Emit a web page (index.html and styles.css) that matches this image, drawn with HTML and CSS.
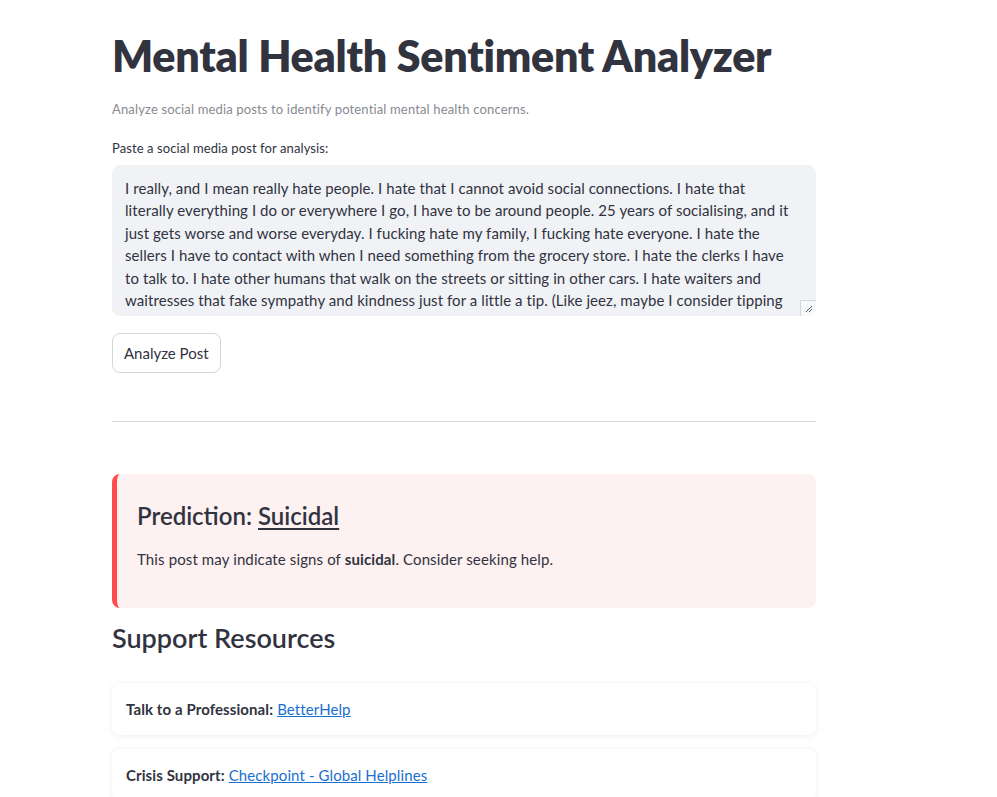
FILE: index.html
```html
<!DOCTYPE html>
<html lang="en">
<head>
<meta charset="utf-8">
<title>Mental Health Sentiment Analyzer</title>
<link rel="stylesheet" href="styles.css">
</head>
<body>
<main class="main">
  <h1 class="title">Mental Health Sentiment Analyzer</h1>
  <p class="caption">Analyze social media posts to identify potential mental health concerns.</p>
  <label class="label">Paste a social media post for analysis:</label>
  <div class="textarea">
    <span class="line">I really, and I mean really hate people. I hate that I cannot avoid social connections. I hate that</span>
    <span class="line">literally everything I do or everywhere I go, I have to be around people. 25 years of socialising, and it</span>
    <span class="line">just gets worse and worse everyday. I fucking hate my family, I fucking hate everyone. I hate the</span>
    <span class="line">sellers I have to contact with when I need something from the grocery store. I hate the clerks I have</span>
    <span class="line">to talk to. I hate other humans that walk on the streets or sitting in other cars. I hate waiters and</span>
    <span class="line">waitresses that fake sympathy and kindness just for a little a tip. (Like jeez, maybe I consider tipping</span>
    <span class="resize"><svg width="8" height="8" viewBox="0 0 8 8"><path d="M7 1 L1 7 M7 4 L4 7" stroke="#555" stroke-width="1" fill="none"/></svg></span>
  </div>
  <button class="btn">Analyze Post</button>
  <hr class="rule">
  <div class="alert">
    <h3 class="alert-title">Prediction: <u>Suicidal</u></h3>
    <p class="alert-text">This post may indicate signs of <b>suicidal</b>. Consider seeking help.</p>
  </div>
  <h2 class="section">Support Resources</h2>
  <div class="card"><b>Talk to a Professional:</b> <a href="#">BetterHelp</a></div>
  <div class="card"><b>Crisis Support:</b> <a href="#">Checkpoint - Global Helplines</a></div>
</main>
</body>
</html>
```
FILE: styles.css
```css
html, body {
  margin: 0;
  padding: 0;
  background: #ffffff;
}
body {
  font-family: Lato, "Noto Sans", sans-serif;
  color: #31333f;
  overflow: hidden;
  height: 797px;
}
.main {
  width: 704px;
  margin-left: 112px;
  padding-top: 30px;
  display: flex;
  flex-direction: column;
}
.title {
  font-size: 43px;
  font-weight: 800;
  line-height: 52px;
  margin: 0;
  letter-spacing: -0.25px;
}
.caption {
  font-size: 13px;
  color: #888a91;
  margin: 18px 0 0;
  line-height: 18px;
  letter-spacing: 0.15px;
}
.label {
  font-size: 13px;
  margin-top: 21px;
  line-height: 18px;
  letter-spacing: 0.1px;
}
.textarea {
  position: relative;
  margin-top: 8px;
  height: 151px;
  box-sizing: border-box;
  background: #f0f2f6;
  border-radius: 8px;
  padding: 12px 13px;
  overflow: hidden;
  font-size: 15px;
  line-height: 22.4px;
  letter-spacing: 0.08px;
}
.line {
  display: block;
  white-space: nowrap;
}
.resize {
  position: absolute;
  right: 0;
  bottom: 0;
  width: 15px;
  height: 15px;
  background: #f7f8fa;
  border-left: 1px solid #d5d7dc;
  border-top: 1px solid #d5d7dc;
  display: flex;
  align-items: center;
  justify-content: center;
}
.btn {
  align-self: flex-start;
  margin-top: 17px;
  height: 40px;
  padding: 0 11px;
  background: #fff;
  border: 1px solid #d6d6d9;
  border-radius: 8px;
  font-family: inherit;
  font-size: 15px;
  color: #31333f;
}
.rule {
  width: 100%;
  margin: 48px 0 0;
  border: 0;
  border-top: 1px solid #d6d6d9;
}
.alert {
  margin-top: 52px;
  height: 134px;
  box-sizing: border-box;
  background: #fdf1f1;
  border-radius: 8px;
  border-left: 5px solid #ff4b4b;
  padding: 26px 20px;
}
.alert-title {
  margin: 0;
  font-size: 24px;
  font-weight: 600;
  line-height: 32px;
}
.alert-title u {
  text-underline-offset: 3px;
}
.alert-text {
  margin: 15px 0 0;
  font-size: 15px;
  line-height: 24px;
  letter-spacing: 0.12px;
}
.section {
  margin: 12px 0 0;
  font-size: 27px;
  font-weight: 600;
  line-height: 36px;
}
.card {
  margin-top: 27px;
  height: 52px;
  box-sizing: border-box;
  padding: 0 14px;
  display: flex;
  align-items: center;
  background: #fff;
  border-radius: 8px;
  box-shadow: 0 1px 6px rgba(0, 0, 0, 0.08);
  font-size: 15px;
  letter-spacing: 0.1px;
}
.card + .card {
  margin-top: 14px;
}
.card b {
  font-weight: 700;
  margin-right: 4px;
}
.card a {
  color: #1a6fd0;
}
```
